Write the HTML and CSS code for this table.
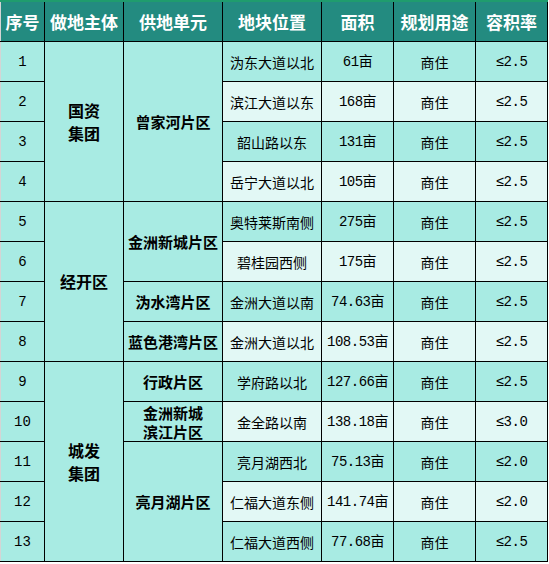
FILE: index.html
```html
<!DOCTYPE html>
<html lang="zh">
<head>
<meta charset="utf-8">
<link rel="stylesheet" href="styles.css">
</head>
<body>
<div class="wrap">
<table class="land">
<colgroup>
<col class="c1"><col class="c2"><col class="c3"><col class="c4"><col class="c5"><col class="c6"><col class="c7">
</colgroup>
<thead>
<tr><th>序号</th><th>做地主体</th><th>供地单元</th><th>地块位置</th><th>面积</th><th>规划用途</th><th>容积率</th></tr>
</thead>
<tbody>
<tr><td class="num">1</td><td class="grp" rowspan="4">国资<br>集团</td><td class="unit" rowspan="4">曾家河片区</td><td>沩东大道以北</td><td class="mono">61亩</td><td>商住</td><td class="mono">≤2.5</td></tr>
<tr class="alt"><td class="num">2</td><td>滨江大道以东</td><td class="mono">168亩</td><td>商住</td><td class="mono">≤2.5</td></tr>
<tr><td class="num">3</td><td>韶山路以东</td><td class="mono">131亩</td><td>商住</td><td class="mono">≤2.5</td></tr>
<tr class="alt"><td class="num">4</td><td>岳宁大道以北</td><td class="mono">105亩</td><td>商住</td><td class="mono">≤2.5</td></tr>
<tr><td class="num">5</td><td class="grp" rowspan="4">经开区</td><td class="unit" rowspan="2">金洲新城片区</td><td>奥特莱斯南侧</td><td class="mono">275亩</td><td>商住</td><td class="mono">≤2.5</td></tr>
<tr class="alt"><td class="num">6</td><td>碧桂园西侧</td><td class="mono">175亩</td><td>商住</td><td class="mono">≤2.5</td></tr>
<tr><td class="num">7</td><td class="unit">沩水湾片区</td><td>金洲大道以南</td><td class="mono">74.63亩</td><td>商住</td><td class="mono">≤2.5</td></tr>
<tr class="alt"><td class="num">8</td><td class="unit">蓝色港湾片区</td><td>金洲大道以北</td><td class="mono">108.53亩</td><td>商住</td><td class="mono">≤2.5</td></tr>
<tr><td class="num">9</td><td class="grp" rowspan="5">城发<br>集团</td><td class="unit">行政片区</td><td>学府路以北</td><td class="mono">127.66亩</td><td>商住</td><td class="mono">≤2.5</td></tr>
<tr class="alt"><td class="num">10</td><td class="unit tight">金洲新城<br>滨江片区</td><td>金全路以南</td><td class="mono">138.18亩</td><td>商住</td><td class="mono">≤3.0</td></tr>
<tr><td class="num">11</td><td class="unit" rowspan="3">亮月湖片区</td><td>亮月湖西北</td><td class="mono">75.13亩</td><td>商住</td><td class="mono">≤2.0</td></tr>
<tr class="alt"><td class="num">12</td><td>仁福大道东侧</td><td class="mono">141.74亩</td><td>商住</td><td class="mono">≤2.0</td></tr>
<tr><td class="num">13</td><td>仁福大道西侧</td><td class="mono">77.68亩</td><td>商住</td><td class="mono">≤2.5</td></tr>
</tbody>
</table>
</div>
</body>
</html>
```
FILE: styles.css
```css
html, body {
  margin: 0;
  padding: 0;
  background: #ffffff;
}
.wrap {
  width: 548px;
  border-top: 2px solid #1f9c6e;
  background: #ffffff;
}
.land {
  border-collapse: collapse;
  table-layout: fixed;
  width: 547px;
  border-left: 1px solid #d4d4d4;
  font-family: "Noto Sans CJK SC", "Noto Sans", sans-serif;
  color: #000;
}
.c1 { width: 44px; }
.c2 { width: 79px; }
.c3 { width: 99px; }
.c4 { width: 99px; }
.c5 { width: 72px; }
.c6 { width: 82px; }
.c7 { width: 72px; }
.land th {
  background: #238b80;
  color: #ffffff;
  font-size: 17px;
  font-weight: bold;
  height: 39px;
  padding: 0;
  border-right: 1px solid #000;
  border-bottom: 1px solid #000;
  line-height: 20px;
  white-space: nowrap;
}
.land td {
  background: #a8ebe3;
  height: 39px;
  padding: 0;
  text-align: center;
  vertical-align: middle;
  font-size: 14px;
  line-height: 18px;
  border-right: 1px solid #000;
  border-bottom: 1px solid #000;
  white-space: nowrap;
}
.land tr.alt td {
  background: #e2f8f5;
}
.land tr.alt td.num,
.land tr.alt td.unit,
.land td.grp,
.land td.unit {
  background: #a8ebe3;
}
.land td.num {
  font-family: "Liberation Mono", "Noto Sans CJK SC", monospace;
  font-size: 14px;
}
.land td.mono {
  font-family: "Liberation Mono", "Noto Sans CJK SC", monospace;
  font-size: 14px;
  letter-spacing: -0.5px;
}
.land td.grp {
  font-size: 16px;
  font-weight: bold;
  line-height: 23px;
}
.land td.unit {
  font-size: 15px;
  font-weight: bold;
}
.land td.tight {
  line-height: 19px;
}
```
